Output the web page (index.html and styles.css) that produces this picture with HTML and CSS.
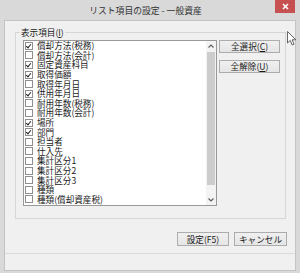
FILE: index.html
```html
<!DOCTYPE html>
<html>
<head>
  <title>リスト項目の設定</title>
  <link rel="stylesheet" href="styles.css">
</head>
<body>
  <div class="window">
    <div class="titlebar">
      <span class="title">リスト項目の設定 - 一般資産</span>
      <button class="close-btn">
        <svg width="7" height="7" viewBox="0 0 7 7"><path d="M1 1 L6 6 M6 1 L1 6" stroke="#fff" stroke-width="1.6"/></svg>
      </button>
    </div>

    <div class="client">
      <fieldset class="group">
        <legend>表示項目(<u>I</u>)</legend>
        <div class="group-body">
          <div class="listbox">
            <ul class="items">
              <li><span class="cb checked"></span><span class="label">償却方法(税務)</span></li>
              <li><span class="cb"></span><span class="label">償却方法(会計)</span></li>
              <li><span class="cb checked"></span><span class="label">固定資産科目</span></li>
              <li><span class="cb checked"></span><span class="label">取得価額</span></li>
              <li><span class="cb"></span><span class="label">取得年月日</span></li>
              <li><span class="cb checked"></span><span class="label">供用年月日</span></li>
              <li><span class="cb"></span><span class="label">耐用年数(税務)</span></li>
              <li><span class="cb"></span><span class="label">耐用年数(会計)</span></li>
              <li><span class="cb checked"></span><span class="label">場所</span></li>
              <li><span class="cb checked"></span><span class="label">部門</span></li>
              <li><span class="cb"></span><span class="label">担当者</span></li>
              <li><span class="cb"></span><span class="label">仕入先</span></li>
              <li><span class="cb"></span><span class="label">集計区分1</span></li>
              <li><span class="cb"></span><span class="label">集計区分2</span></li>
              <li><span class="cb"></span><span class="label">集計区分3</span></li>
              <li><span class="cb"></span><span class="label">種類</span></li>
              <li><span class="cb"></span><span class="label">種類(償却資産税)</span></li>
            </ul>
            <div class="scrollbar">
              <div class="arrow">
                <svg width="6" height="4" viewBox="0 0 6 4"><path d="M0.5 3.5 L3 1 L5.5 3.5" fill="none" stroke="#606060" stroke-width="1.2"/></svg>
              </div>
              <div class="track"><div class="thumb"></div></div>
              <div class="arrow">
                <svg width="6" height="4" viewBox="0 0 6 4"><path d="M0.5 0.5 L3 3 L5.5 0.5" fill="none" stroke="#606060" stroke-width="1.2"/></svg>
              </div>
            </div>
          </div>
          <div class="side-buttons">
            <button class="btn side">全選択(<u>C</u>)</button>
            <button class="btn side">全解除(<u>U</u>)</button>
          </div>
        </div>
      </fieldset>

      <div class="footer">
        <button class="btn ok">設定(F5)</button>
        <button class="btn cancel">キャンセル</button>
      </div>
      <div class="status"></div>
    </div>

    <svg class="cursor" width="11" height="16" viewBox="0 0 11 16">
      <path d="M0.5 0.5 L0.5 12 L3.2 9.4 L5.2 14 L7 13.2 L5.1 8.8 L8.8 8.8 Z" fill="#fff" stroke="#555" stroke-width="0.9"/>
    </svg>
  </div>
</body>
</html>
```

FILE: styles.css
```css
body {
  margin: 0;
  width: 300px;
  height: 273px;
  overflow: hidden;
  font-family: "Noto Sans CJK JP", "Noto Sans", sans-serif;
  color: #1a1a1a;
}

.window {
  position: relative;
  width: 300px;
  height: 273px;
  box-sizing: border-box;
  background: #d9d9d9;
  padding: 0 4px 2px 4px;
  display: flex;
  flex-direction: column;
}

.titlebar {
  height: 20px;
  flex: none;
  display: flex;
  align-items: flex-start;
}

.title {
  flex: 1;
  text-align: center;
  font-size: 8.8px;
  line-height: 21px;
  color: #333;
  padding-left: 12px;
}

.close-btn {
  width: 20px;
  height: 13px;
  margin-right: 1px;
  padding: 0;
  border: none;
  background: #c75050;
  display: flex;
  align-items: center;
  justify-content: center;
}

.client {
  flex: 1;
  background: #f0f0f0;
  border: 1px solid #c4c4c4;
  display: flex;
  flex-direction: column;
}

/* グループボックス */
.group {
  margin: 6px 9px 13px 10px;
  padding: 3px 5px 12px 7px;
  border: 1px solid #d6d6d6;
  min-width: 0;
}

.group legend {
  font-size: 8.6px;
  line-height: 10px;
  padding: 0 1px;
  margin-left: -3px;
}

.group-body {
  display: flex;
  align-items: flex-start;
}

.listbox {
  width: 194px;
  height: 166px;
  box-sizing: border-box;
  border: 1px solid #999;
  background: #fff;
  display: flex;
}

.items {
  list-style: none;
  margin: 0;
  padding: 0;
  flex: 1;
}

.items li {
  height: 9.6px;
  display: flex;
  align-items: center;
  gap: 4px;
  padding-left: 1px;
  font-size: 8.6px;
  line-height: 9.6px;
  white-space: nowrap;
}

.label {
  line-height: 9px;
}

.cb {
  width: 8px;
  height: 8px;
  box-sizing: border-box;
  border: 1px solid #8f8f8f;
  background: #fff;
  flex: none;
  position: relative;
}

.cb.checked::after {
  content: "";
  position: absolute;
  left: 1px;
  top: 0;
  width: 2px;
  height: 4px;
  border-right: 1.5px solid #222;
  border-bottom: 1.5px solid #222;
  transform: rotate(40deg);
}

.scrollbar {
  width: 10px;
  background: #f3f3f3;
  display: flex;
  flex-direction: column;
}

.arrow {
  height: 10px;
  display: flex;
  align-items: center;
  justify-content: center;
}

.track {
  flex: 1;
  padding: 1px 1px 0 1px;
}

.thumb {
  height: 133px;
  background: #cdcdcd;
}

.side-buttons {
  display: flex;
  flex-direction: column;
  gap: 7px;
  margin-left: 2px;
}

.btn {
  height: 13px;
  padding: 0;
  border: 1px solid #acacac;
  background: linear-gradient(#f0f0f0, #e5e5e5);
  font-family: inherit;
  font-size: 8.6px;
  line-height: 11px;
  color: #1a1a1a;
}

.btn.side {
  width: 61px;
}

.footer {
  display: flex;
  justify-content: flex-end;
  gap: 5px;
  padding-right: 8px;
  margin-bottom: 7px;
}

.btn.ok {
  width: 52px;
  height: 14px;
}

.btn.cancel {
  width: 53px;
  height: 14px;
}

.status {
  flex: 1;
  border-top: 1px solid #dadada;
}

.cursor {
  position: absolute;
  left: 287px;
  top: 31px;
}
```
